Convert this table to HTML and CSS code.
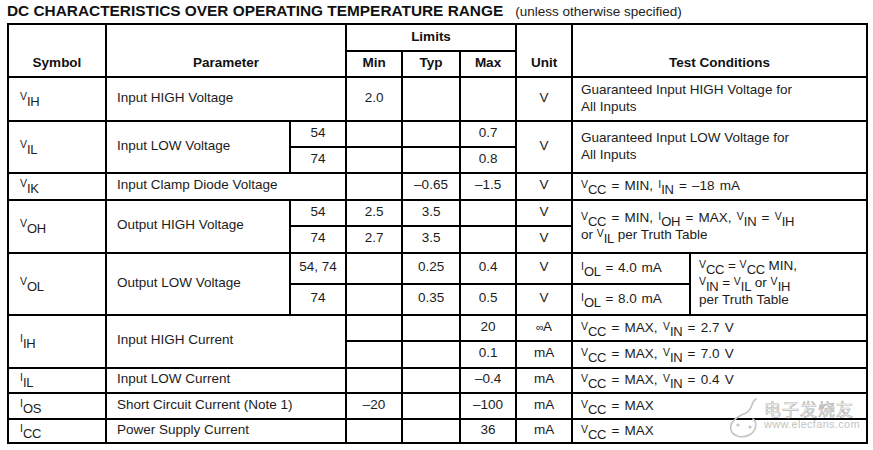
FILE: index.html
```html
<!DOCTYPE html>
<html>
<head>
<meta charset="utf-8">
<link rel="stylesheet" href="styles.css">
</head>
<body>
<div class="page">
  <div class="title"><b>DC CHARACTERISTICS OVER OPERATING TEMPERATURE RANGE</b><span class="note">(unless otherwise specified)</span></div>
  <table class="dc">
    <colgroup>
      <col class="w-sym"><col class="w-par"><col class="w-sub"><col class="w-min"><col class="w-typ"><col class="w-max"><col class="w-unit"><col class="w-t1"><col class="w-t2">
    </colgroup>
    <tr class="h27">
      <th class="b" rowspan="2">Symbol</th>
      <th class="b" rowspan="2" colspan="2">Parameter</th>
      <th colspan="3">Limits</th>
      <th class="b" rowspan="2">Unit</th>
      <th class="b" rowspan="2" colspan="2">Test Conditions</th>
    </tr>
    <tr class="h26">
      <th>Min</th><th>Typ</th><th>Max</th>
    </tr>

    <tr class="h44">
      <td class="sym"><span class="m">V</span><span class="s">IH</span></td>
      <td colspan="2">Input HIGH Voltage</td>
      <td class="c">2.0</td><td></td><td></td>
      <td class="c">V</td>
      <td colspan="2" class="t">Guaranteed Input HIGH Voltage for<br>All Inputs</td>
    </tr>

    <tr class="h26">
      <td class="sym" rowspan="2"><span class="m">V</span><span class="s">IL</span></td>
      <td rowspan="2">Input LOW Voltage</td>
      <td class="c">54</td><td></td><td></td><td class="c">0.7</td>
      <td class="c" rowspan="2">V</td>
      <td colspan="2" rowspan="2" class="t">Guaranteed Input LOW Voltage for<br>All Inputs</td>
    </tr>
    <tr class="h26">
      <td class="c">74</td><td></td><td></td><td class="c">0.8</td>
    </tr>

    <tr class="h27">
      <td class="sym"><span class="m">V</span><span class="s">IK</span></td>
      <td colspan="2">Input Clamp Diode Voltage</td>
      <td></td><td class="c">–0.65</td><td class="c">–1.5</td>
      <td class="c">V</td>
      <td colspan="2" class="t"><span class="f"><span class="m">V</span><span class="s">CC</span> = MIN, <span class="m">I</span><span class="s">IN</span> = –18 mA</span></td>
    </tr>

    <tr class="h26">
      <td class="sym" rowspan="2"><span class="m">V</span><span class="s">OH</span></td>
      <td rowspan="2">Output HIGH Voltage</td>
      <td class="c">54</td><td class="c">2.5</td><td class="c">3.5</td><td></td>
      <td class="c">V</td>
      <td colspan="2" rowspan="2" class="t"><span class="f"><span class="m">V</span><span class="s">CC</span> = MIN, <span class="m">I</span><span class="s">OH</span> = MAX, <span class="m">V</span><span class="s">IN</span> = <span class="m">V</span><span class="s">IH</span></span><br>or <span class="m">V</span><span class="s">IL</span> per Truth Table</td>
    </tr>
    <tr class="h27">
      <td class="c">74</td><td class="c">2.7</td><td class="c">3.5</td><td></td>
      <td class="c">V</td>
    </tr>

    <tr class="h31">
      <td class="sym" rowspan="2"><span class="m">V</span><span class="s">OL</span></td>
      <td rowspan="2">Output LOW Voltage</td>
      <td class="c">54, 74</td><td></td><td class="c">0.25</td><td class="c">0.4</td>
      <td class="c">V</td>
      <td class="t"><span class="f1"><span class="m">I</span><span class="s">OL</span> = 4.0 mA</span></td>
      <td rowspan="2" class="t t3"><span class="m">V</span><span class="s">CC</span> = <span class="m">V</span><span class="s">CC</span> MIN,<br><span class="m">V</span><span class="s">IN</span> = <span class="m">V</span><span class="s">IL</span> or <span class="m">V</span><span class="s">IH</span><br>per Truth Table</td>
    </tr>
    <tr class="h31">
      <td class="c">74</td><td></td><td class="c">0.35</td><td class="c">0.5</td>
      <td class="c">V</td>
      <td class="t"><span class="f1"><span class="m">I</span><span class="s">OL</span> = 8.0 mA</span></td>
    </tr>

    <tr class="h26">
      <td class="sym" rowspan="2"><span class="m">I</span><span class="s">IH</span></td>
      <td colspan="2" rowspan="2">Input HIGH Current</td>
      <td></td><td></td><td class="c">20</td>
      <td class="c"><span class="mu">∞</span>A</td>
      <td colspan="2" class="t"><span class="f"><span class="m">V</span><span class="s">CC</span> = MAX, <span class="m">V</span><span class="s">IN</span> = 2.7 V</span></td>
    </tr>
    <tr class="h27">
      <td></td><td></td><td class="c">0.1</td>
      <td class="c">mA</td>
      <td colspan="2" class="t"><span class="f"><span class="m">V</span><span class="s">CC</span> = MAX, <span class="m">V</span><span class="s">IN</span> = 7.0 V</span></td>
    </tr>

    <tr class="h25">
      <td class="sym"><span class="m">I</span><span class="s">IL</span></td>
      <td colspan="2">Input LOW Current</td>
      <td></td><td></td><td class="c">–0.4</td>
      <td class="c">mA</td>
      <td colspan="2" class="t"><span class="f"><span class="m">V</span><span class="s">CC</span> = MAX, <span class="m">V</span><span class="s">IN</span> = 0.4 V</span></td>
    </tr>

    <tr class="h26">
      <td class="sym"><span class="m">I</span><span class="s">OS</span></td>
      <td colspan="2">Short Circuit Current (Note 1)</td>
      <td class="c">–20</td><td></td><td class="c">–100</td>
      <td class="c">mA</td>
      <td colspan="2" class="t"><span class="f"><span class="m">V</span><span class="s">CC</span> = MAX</span></td>
    </tr>

    <tr class="h24">
      <td class="sym"><span class="m">I</span><span class="s">CC</span></td>
      <td colspan="2">Power Supply Current</td>
      <td></td><td></td><td class="c">36</td>
      <td class="c">mA</td>
      <td colspan="2" class="t"><span class="f"><span class="m">V</span><span class="s">CC</span> = MAX</span></td>
    </tr>
  </table>

  <div class="wm">
    <svg class="wm-logo" width="36" height="44" viewBox="0 0 36 44">
      <path d="M30 3 C 24 6, 28 13, 20 17 C 10 21, 3 26, 5 34 C 7 41, 18 43, 25 38 C 31 33, 31 26, 27 23" fill="none" stroke="#c4c4c4" stroke-width="1.6" stroke-linecap="round"/>
      <circle cx="12" cy="29" r="1.6" fill="#c4c4c4"/>
      <circle cx="24" cy="31" r="1.6" fill="#c4c4c4"/>
    </svg>
    <div class="wm-text">
      <div class="wm-cn">电子发烧友</div>
      <div class="wm-url">www.elecfans.com</div>
    </div>
  </div>
</div>
</body>
</html>
```

FILE: styles.css
```css
* { box-sizing: border-box; }

body {
  margin: 0;
  background: #fff;
  font-family: "Liberation Sans", Arial, "Noto Sans CJK SC", sans-serif;
  color: #1c1c1c;
}

.page {
  position: relative;
  width: 873px;
  height: 450px;
  padding: 2px 0 0 7px;
}

.title {
  height: 21px;
  line-height: 18px;
  white-space: nowrap;
  color: #111;
}

.title b {
  font-size: 15.4px;
  font-weight: bold;
}

.title .note {
  font-size: 13.5px;
  margin-left: 12px;
  color: #222;
}

table.dc {
  margin-left: 0;
  border-collapse: collapse;
  table-layout: fixed;
  width: 859px;
  font-size: 13.5px;
  line-height: 16.5px;
}

.w-sym { width: 98px; }
.w-par { width: 184px; }
.w-sub { width: 56px; }
.w-min { width: 56px; }
.w-typ { width: 58px; }
.w-max { width: 56px; }
.w-unit { width: 56px; }
.w-t1 { width: 118px; }
.w-t2 { width: 177px; }

.h24 { height: 24px; }
.h25 { height: 25px; }
.h26 { height: 26px; }
.h27 { height: 27px; }
.h31 { height: 31px; }
.h44 { height: 44px; }

.dc th,
.dc td {
  border: 2px solid #000;
  padding: 0 4px 2px 10px;
  vertical-align: middle;
  text-align: left;
  white-space: nowrap;
}

.dc th {
  font-weight: bold;
  text-align: center;
  padding: 0 0 1px 0;
  color: #111;
}

.dc th.b {
  vertical-align: bottom;
  padding-bottom: 5px;
}

.dc td.c {
  text-align: center;
  padding-left: 0;
  padding-right: 0;
}

.dc td.sym { padding-left: 11px; }
.dc td.t { padding-left: 8px; line-height: 17px; }
.dc td.t3 { line-height: 17px; padding-bottom: 4px; }

.f { word-spacing: 1.5px; }
.f1 { word-spacing: 1px; }

.m {
  font-size: 10.5px;
  vertical-align: 2px;
  line-height: 0;
}

.s {
  font-size: 13px;
  letter-spacing: -0.3px;
  vertical-align: -4px;
  line-height: 0;
}

.mu {
  font-size: 11px;
  letter-spacing: -1px;
}

.wm {
  position: absolute;
  left: 726px;
  top: 396px;
  display: flex;
  align-items: flex-start;
  gap: 2px;
  pointer-events: none;
}

.wm-text {
  display: flex;
  flex-direction: column;
  padding-top: 3px;
}

.wm-cn {
  font-family: "Noto Sans CJK SC", sans-serif;
  font-size: 17px;
  line-height: 19px;
  letter-spacing: 1px;
  color: rgba(255, 255, 255, 0.6);
  -webkit-text-stroke: 0.7px #b5b5b5;
}

.wm-url {
  font-family: "Liberation Sans", Arial, sans-serif;
  font-size: 11px;
  line-height: 12px;
  letter-spacing: 0.3px;
  color: #c3c3c3;
}
```
